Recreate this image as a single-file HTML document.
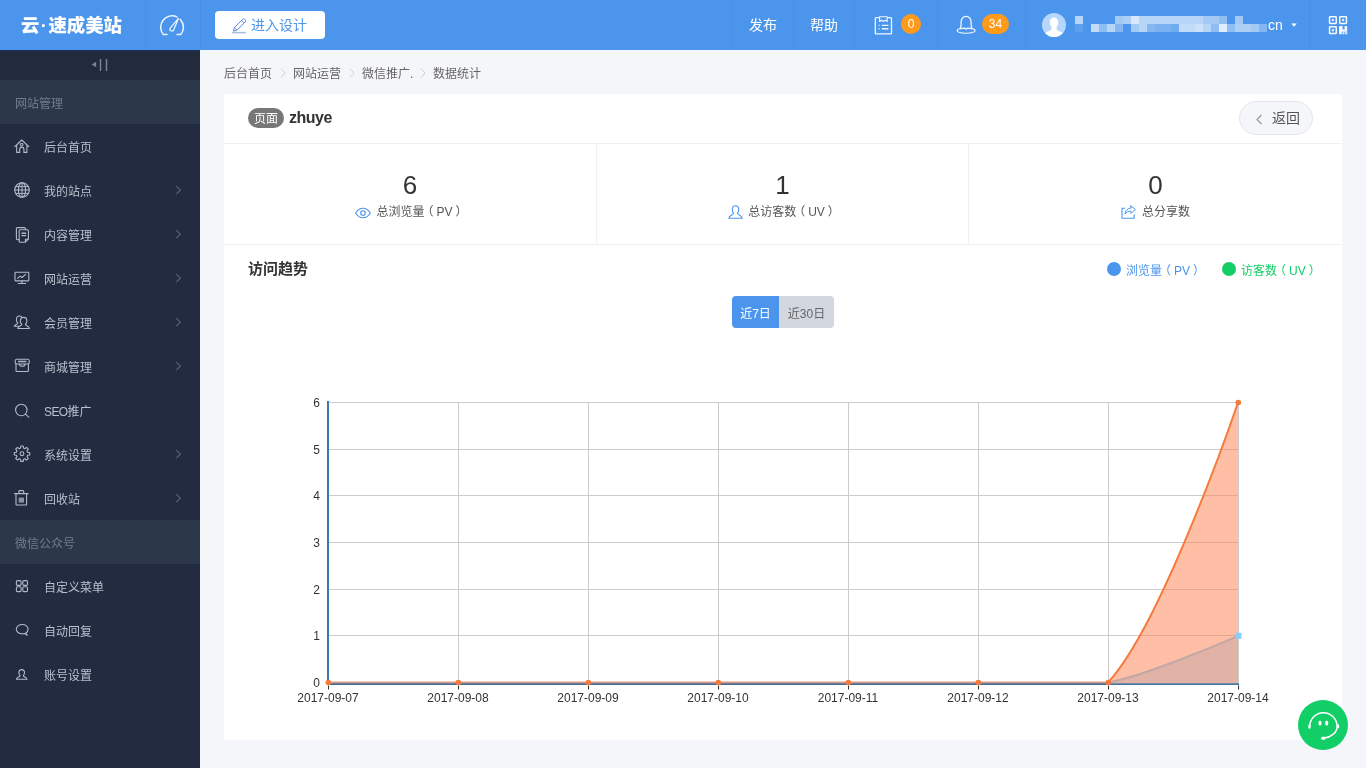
<!DOCTYPE html>
<html lang="zh-CN">
<head>
<meta charset="utf-8">
<title>数据统计</title>
<style>
*{box-sizing:border-box;margin:0;padding:0}
html,body{width:1366px;height:768px;overflow:hidden}
body{font-family:"Liberation Sans","Noto Sans CJK SC",sans-serif;font-size:12px;color:#333;background:#f5f6fa;position:relative}
.po{position:relative;left:-3px}.pc{position:relative;left:3px}
#hd,#sb,#bc,#card,#kf{will-change:transform}
/* header */
#hd{position:absolute;left:0;top:0;width:1366px;height:50px;background:#4b96ec;color:#fff}
#hd .sep{position:absolute;top:0;width:1px;height:50px;background:#4990e3}
#logo{position:absolute;left:21px;top:12px;height:28px;line-height:28px;font-size:18.4px;font-weight:900;color:#fff;white-space:nowrap}
#logo b{display:inline-block;width:9px;text-align:center;font-weight:900}
#design{position:absolute;left:215px;top:11px;width:110px;height:28px;background:#fff;border-radius:4px;color:#4b96ec;font-size:14px;line-height:28px;padding-left:36px;white-space:nowrap}
.hlink{position:absolute;top:0;height:50px;line-height:51px;font-size:14px;color:#fff;white-space:nowrap}
.badge{position:absolute;top:14px;height:20px;border-radius:10px;background:#ff9a1a;color:#fff;font-size:12px;line-height:21px;text-align:center}
/* sidebar */
#sb{position:absolute;left:0;top:50px;width:200px;height:718px;background:#222b3f}
#sb .fold{height:30px;background:#222b3b;border-top:1px solid #17335f}
#sb .sec{height:44px;line-height:48px;overflow:hidden;background:#2c3749;color:#727c8e;font-size:12px;padding-left:15px}
#sb .it{height:44px;line-height:48px;overflow:hidden;color:#b9c0ce;font-size:12px;padding-left:44px;white-space:nowrap}
#sbic{position:absolute;left:0;top:0}
/* main */
#bc{position:absolute;left:224px;top:64px;height:20px;line-height:20px;font-size:12px;color:#666;white-space:nowrap}
#bc span.t{position:absolute;top:0}
#bc svg{position:absolute;top:3.6px;width:6px;height:10px;fill:none;stroke:#cdd0d8;stroke-width:1}
#card{position:absolute;left:224px;top:94px;width:1118px;height:646px;background:#fff;border-radius:3px}
.hl{position:absolute;left:0;width:1118px;height:1px;background:#eff0f4}
.vl{position:absolute;top:50px;width:1px;height:100px;background:#eff0f4}
#pg{position:absolute;left:24px;top:14px;width:36px;height:20px;border-radius:10px;background:#777;color:#fff;font-size:12px;line-height:22px;overflow:hidden;text-align:center}
#pgn{position:absolute;left:65px;top:12px;font-size:16px;letter-spacing:-.5px;font-weight:bold;color:#333;line-height:24px}
#back{position:absolute;left:1015px;top:7px;width:74px;height:34px;border-radius:17px;border:1px solid #e4e7ee;background:#f5f6fa;color:#555;font-size:14px;line-height:32px;padding-left:32px}
#back svg{position:absolute;left:15.500px;top:11.800px;width:7px;height:11px;fill:none;stroke:#999;stroke-width:1.2}
.st{position:absolute;top:50px;height:100px;text-align:center}
.st .n{position:absolute;left:0;right:0;top:24px;font-size:26px;line-height:34px;color:#333}
.st .l{position:absolute;left:0;right:0;top:58px;font-size:12px;line-height:20px;color:#555;white-space:nowrap}
.st .l svg{vertical-align:-2.500px;margin-right:5px;fill:none;stroke:#4b96ec;stroke-width:1.1;stroke-linecap:round;stroke-linejoin:round}
#tt{position:absolute;left:24px;top:164px;font-size:15px;font-weight:bold;color:#333;line-height:22px}
.lg{position:absolute;top:167px;font-size:12px;line-height:21px;white-space:nowrap}
.lg i{position:absolute;left:-19px;top:1px;width:14px;height:14px;border-radius:7px}
.tab{position:absolute;top:202px;height:32px;line-height:36px;overflow:hidden;font-size:12px;text-align:center}
#chart{position:absolute;left:0;top:246px}
#chart text{font-family:"Liberation Sans",sans-serif;font-size:12px;fill:#333}
#kf{position:absolute;left:1298px;top:700px;width:50px;height:50px;border-radius:25px;background:#12ce66}
</style>
</head>
<body>
<div id="hd">
  <div id="logo">云<b>·</b>速成美站</div>
  <div class="sep" style="left:145px"></div>
  <div class="sep" style="left:200px"></div>
  <div id="design">进入设计<svg width="16" height="16" viewBox="231 17.500 16 16" style="position:absolute;left:16px;top:6.500px" fill="none" stroke="#5a8ee2" stroke-width="1" stroke-linejoin="round"><path d="M232.200 32.100h13.600" stroke="#aabbdd" stroke-width="1.500"/><path d="M233.400 30.700l1-3.600 8.300-8.300a1.450 1.450 0 0 1 2.100 0l.5.500a1.450 1.450 0 0 1 0 2.100l-8.300 8.300zM234.400 27.100l2.600 2.600M241.600 19.900l2.600 2.600"/></svg></div>
  <div class="sep" style="left:732px"></div>
  <div class="hlink" style="left:749px">发布</div>
  <div class="sep" style="left:793px"></div>
  <div class="hlink" style="left:810px">帮助</div>
  <div class="sep" style="left:854px"></div>
  <div class="badge" style="left:901px;width:20px">0</div>
  <div class="sep" style="left:937px"></div>
  <div class="badge" style="left:982px;width:27px">34</div>
  <div class="sep" style="left:1025px"></div>
  <div class="hlink" style="left:1268px">cn</div>
  <div class="sep" style="left:1309px"></div>
<svg id="hdic" width="1366" height="50" viewBox="0 0 1366 50" style="position:absolute;left:0;top:0">
<g fill="none" stroke="#fff" stroke-width="1.3" stroke-linecap="round" stroke-linejoin="round" opacity=".92">

<path d="M167 34.400H163.200A11.400 11.400 0 0 1 176.900 16.900M180.300 19.400A11.400 11.400 0 0 1 180.900 34.400H177.100" stroke-width="1.500"/>
<path d="M178.400 18.400L173.550 30.200A1.900 1.900 0 0 1 170.250 28.200Z" stroke-width="1.200"/>

<path d="M879.300 17.700h-3.400a.6.600 0 0 0-.6.600v15a.6.600 0 0 0 .6.600h15a.6.600 0 0 0 .6-.6v-15a.6.600 0 0 0-.6-.6h-3.400"/>
<path d="M879.600 16.800h7.600v4.700l-1.900-1.300-1.900 1.300-1.900-1.300-1.900 1.300z" stroke-width="1.100"/>
<path d="M878.600 25.400h1M881.800 25.400h6.600M878.600 28.700h1M881.800 28.700h6.600" stroke-width="1.400" stroke-linecap="butt"/>

<path d="M960.300 28.600c.5-1.200.8-2.600.8-4.300v-2.400c0-3.100 2.200-5.500 5-5.500s5 2.400 5 5.500v2.400c0 1.700.3 3.100.8 4.300"/>
<path d="M960.300 28.500c-1.900.4-3.200 1.200-3.200 2.100 0 1.500 4 2.600 9 2.600s9-1.100 9-2.600c0-.9-1.300-1.700-3.200-2.100M960.400 28.600c1.400-.3 3.300-.5 4.600-.5l1.100 1.300 1.100-1.300c1.300 0 3.200.2 4.600.5" stroke-width="1.100"/>
</g>

<circle cx="1054" cy="25" r="12" fill="#b7d6fb"/>
<clipPath id="avc"><circle cx="1054" cy="25" r="12"/></clipPath>
<g clip-path="url(#avc)" fill="#fff">
<path d="M1049.800 22.300c0-2.800 1.700-4.700 4.200-4.700s4.200 1.900 4.200 4.700c0 1.700-.7 3.700-1.600 4.800v2.100c0 .8 1.400 1.400 3.400 2.200 1.800.7 3 1.600 3.600 2.700l-4 4h-11.200l-4-4c.6-1.100 1.800-2 3.600-2.700 2-.8 3.400-1.400 3.400-2.200v-2.100c-.9-1.100-1.600-3.100-1.600-4.800z"/>
</g>

<g fill="#fff"><rect x="1075" y="16" width="8" height="8" opacity="0.6"/><rect x="1115" y="16" width="8" height="8" opacity="0.49"/><rect x="1123" y="16" width="8" height="8" opacity="0.55"/><rect x="1131" y="16" width="8" height="8" opacity="0.78"/><rect x="1139" y="16" width="8" height="8" opacity="0.6"/><rect x="1147" y="16" width="8" height="8" opacity="0.6"/><rect x="1155" y="16" width="8" height="8" opacity="0.6"/><rect x="1163" y="16" width="8" height="8" opacity="0.6"/><rect x="1171" y="16" width="8" height="8" opacity="0.6"/><rect x="1179" y="16" width="8" height="8" opacity="0.6"/><rect x="1187" y="16" width="8" height="8" opacity="0.6"/><rect x="1195" y="16" width="8" height="8" opacity="0.6"/><rect x="1203" y="16" width="8" height="8" opacity="0.49"/><rect x="1211" y="16" width="8" height="8" opacity="0.49"/><rect x="1219" y="16" width="8" height="8" opacity="0.38"/><rect x="1235" y="16" width="8" height="8" opacity="0.49"/><rect x="1075" y="24" width="8" height="8" opacity="0.09"/><rect x="1091" y="24" width="8" height="8" opacity="0.66"/><rect x="1099" y="24" width="8" height="8" opacity="0.38"/><rect x="1107" y="24" width="8" height="8" opacity="0.6"/><rect x="1115" y="24" width="8" height="8" opacity="0.32"/><rect x="1131" y="24" width="8" height="8" opacity="0.49"/><rect x="1139" y="24" width="8" height="8" opacity="0.6"/><rect x="1147" y="24" width="8" height="8" opacity="0.32"/><rect x="1155" y="24" width="8" height="8" opacity="0.26"/><rect x="1163" y="24" width="8" height="8" opacity="0.26"/><rect x="1171" y="24" width="8" height="8" opacity="0.2"/><rect x="1179" y="24" width="8" height="8" opacity="0.66"/><rect x="1187" y="24" width="8" height="8" opacity="0.66"/><rect x="1195" y="24" width="8" height="8" opacity="0.72"/><rect x="1203" y="24" width="8" height="8" opacity="0.6"/><rect x="1211" y="24" width="8" height="8" opacity="0.38"/><rect x="1219" y="24" width="8" height="8" opacity="0.83"/><rect x="1227" y="24" width="8" height="8" opacity="0.38"/><rect x="1235" y="24" width="8" height="8" opacity="0.55"/><rect x="1243" y="24" width="8" height="8" opacity="0.55"/><rect x="1251" y="24" width="8" height="8" opacity="0.49"/><rect x="1259" y="24" width="8" height="8" opacity="0.32"/></g>

<path d="M1291.300 23.400h5.400l-2.700 3.300z" fill="#fff"/>

<g fill="none" stroke="#fff" stroke-width="1.500" opacity=".95">
<rect x="1329.550" y="16.750" width="6.700" height="6.700" rx=".6"/>
<rect x="1339.750" y="16.750" width="6.700" height="6.700" rx=".6"/>
<rect x="1329.550" y="26.850" width="6.700" height="6.700" rx=".6"/>
</g>
<g fill="#fff" opacity=".95">
<rect x="1331.900" y="19.100" width="2" height="2"/>
<rect x="1342.100" y="19.100" width="2" height="2"/>
<rect x="1331.900" y="29.200" width="2" height="2"/>
<path d="M1339 27.100q0-1 1-1h2.600v3.300h2v-3.300h1.600q1 0 1 1v4.600h-5.400v2.600h-1.800q-1 0-1-1z"/>
<rect x="1342.600" y="32.200" width="1.800" height="2.100"/>
<rect x="1345.300" y="32.200" width="1.900" height="2.100"/>
</g>
</svg>
</div>

<div id="sb">
  <div class="fold"></div>
  <div class="sec">网站管理</div>
  <div class="it">后台首页</div>
  <div class="it">我的站点</div>
  <div class="it">内容管理</div>
  <div class="it">网站运营</div>
  <div class="it">会员管理</div>
  <div class="it">商城管理</div>
  <div class="it"><span style="letter-spacing:-.6px">SEO</span>推广</div>
  <div class="it">系统设置</div>
  <div class="it">回收站</div>
  <div class="sec">微信公众号</div>
  <div class="it">自定义菜单</div>
  <div class="it">自动回复</div>
  <div class="it">账号设置</div>
<svg id="sbic" width="200" height="718" viewBox="0 50 200 718">
<g fill="none" stroke="#b3bbca" stroke-width="1.1" stroke-linecap="round" stroke-linejoin="round">

<path d="M96.2 61.7v5.5l-4.5-2.75z" fill="#7a859a" stroke="none"/>
<path d="M100.5 59v12M106.5 59v12" stroke="#7a859a" stroke-width="1.4" stroke-linecap="butt"/>

<path d="M14.8 146.6l7-6.6 7 6.6M16.7 145.2v7.2h3v-3.2a2.1 2.1 0 0 1 4.2 0v3.2h3v-7.2"/>
<rect x="20.7" y="143.6" width="2.2" height="2.2" stroke-width="1"/>

<circle cx="22" cy="190" r="7.3"/>
<ellipse cx="22" cy="190" rx="3.6" ry="7.3"/>
<path d="M22 182.7v14.6M15.6 186.6h12.8M14.7 190h14.6M15.6 193.4h12.8" stroke-width="1"/>

<path d="M18.6 239.6h-1.2a1 1 0 0 1-1-1v-10a1 1 0 0 1 1-1h7a1 1 0 0 1 1 1v1"/>
<path d="M19.2 230.8a1 1 0 0 1 1-1h7.2a1 1 0 0 1 1 1v8.4l-3 3h-5.2a1 1 0 0 1-1-1zM28.2 239.2h-2.8v2.9"/>
<path d="M21.5 233.3h4.6M21.5 235.6h4.6" stroke-width="1.4" stroke-linecap="butt"/>

<rect x="15" y="272.3" width="13.8" height="8.6" rx=".6"/>
<path d="M21.9 281v2.3M18.2 283.5h7.4M17.6 278.4l2.4-2.3 2 1.4 3.6-3.2"/>

<path d="M21.500 316.600c-.5-.4-1.200-.6-1.900-.6-1.900 0-3.200 1.600-3.200 3.700 0 1.400.6 2.600 1.500 3.300-.3 1.600-3.200 1.400-3.600 3.300h4.300"/>
<path d="M21.800 324.300c-1-.8-1.500-1.900-1.500-3.200 0-2.100 1.400-3.700 3.300-3.700s3.300 1.600 3.300 3.700c0 1.300-.5 2.400-1.500 3.200.4 1.800 3.700 1.700 4 4.200H17.800c.3-2.500 3.600-2.400 4-4.200z"/>

<path d="M16.600 359.200h11.200c1 0 1.500 1 1.500 2v1.100c0 1-.8 1.700-1.700 1.700h-10.800c-.9 0-1.700-.7-1.700-1.700v-1.100c0-1 .5-2 1.500-2z"/>
<path d="M18.500 361.500h7.400" stroke-width="1.300"/>
<path d="M16 364.200v6.300a1 1 0 0 0 1 1h10.400a1 1 0 0 0 1-1v-6.300M19.500 364.200c0 1.200 1.100 2.100 2.700 2.100s2.700-.9 2.700-2.100"/>

<circle cx="21.300" cy="410" r="5.700"/>
<path d="M25.500 414.200l3.300 2.900"/>

<circle cx="22" cy="453.700" r="1.900"/>
<path d="M20.51 448.09L20.76 446.00L23.24 446.00L23.49 448.09L24.91 448.68L26.57 447.38L28.32 449.13L27.02 450.79L27.61 452.21L29.70 452.46L29.70 454.94L27.61 455.19L27.02 456.61L28.32 458.27L26.57 460.02L24.91 458.72L23.49 459.31L23.24 461.40L20.76 461.40L20.51 459.31L19.09 458.72L17.43 460.02L15.68 458.27L16.98 456.61L16.39 455.19L14.30 454.94L14.30 452.46L16.39 452.21L16.98 450.79L15.68 449.13L17.43 447.38L19.09 448.68Z"/>

<path d="M14.500 493.600h13.600M18.900 493.400v-2a.8.800 0 0 1 .8-.8h3.200a.8.800 0 0 1 .8.800v2M16 493.800v10.400a.8.800 0 0 0 .8.800h9a.8.800 0 0 0 .8-.8v-10.400"/>
<rect x="18.700" y="497.600" width="5.300" height="5" fill="#8a93a5" stroke="none"/>

<rect x="16.400" y="580.600" width="4.700" height="4.800" rx="1.200"/>
<rect x="22.800" y="580.600" width="4.700" height="4.800" rx="1.200"/>
<rect x="16.400" y="586.800" width="4.700" height="4.800" rx="1.200"/>
<rect x="22.800" y="586.800" width="4.700" height="4.800" rx="1.200"/>

<path d="M25.800 633c1.500-.9 2.300-2.300 2.300-3.800 0-2.600-2.600-4.700-5.900-4.700s-5.900 2.100-5.900 4.700 2.600 4.700 5.900 4.700c.8 0 1.600-.1 2.300-.4l2.700 1.700z"/>

<path d="M20.100 675.600c-.8-.7-1.200-1.700-1.200-2.800 0-1.900 1.200-3.200 2.800-3.200s2.800 1.300 2.800 3.200c0 1.100-.4 2.100-1.200 2.800.3 1.500 3.400 1.400 3.700 3.600H16.400c.3-2.200 3.400-2.100 3.700-3.600z"/>
</g>
<g fill="none" stroke="#5c6678" stroke-width="1.100">
<path d="M176.300 186.200l4 4-4 4"/>
<path d="M176.300 230.200l4 4-4 4"/>
<path d="M176.300 274.200l4 4-4 4"/>
<path d="M176.300 318.200l4 4-4 4"/>
<path d="M176.300 362.200l4 4-4 4"/>
<path d="M176.300 450.200l4 4-4 4"/>
<path d="M176.300 494.200l4 4-4 4"/>
</g>
</svg>
</div>

<div id="bc">
  <span class="t" style="left:0">后台首页</span>
  <svg style="left:55.500px" viewBox="0 0 6 10"><path d="M1 .5l4 4.500-4 4.500"/></svg>
  <span class="t" style="left:69px">网站运营</span>
  <svg style="left:124.500px" viewBox="0 0 6 10"><path d="M1 .5l4 4.500-4 4.500"/></svg>
  <span class="t" style="left:138px">微信推广.</span>
  <svg style="left:195.500px" viewBox="0 0 6 10"><path d="M1 .5l4 4.500-4 4.500"/></svg>
  <span class="t" style="left:209px">数据统计</span>
</div>

<div id="card">
  <div id="pg">页面</div>
  <div id="pgn">zhuye</div>
  <div id="back">返回<svg viewBox="0 0 7 11"><path d="M5.500 1l-4.500 4.500 4.500 4.500"/></svg></div>
  <div class="hl" style="top:49px"></div>
  <div class="st" style="left:0;width:372px"><div class="n">6</div><div class="l"><svg width="16" height="12" viewBox="0 0 16 12"><path d="M.7 6c1.800-3.200 4.400-4.800 7.300-4.800s5.500 1.600 7.300 4.800c-1.800 3.200-4.400 4.800-7.300 4.800s-5.500-1.600-7.300-4.800z"/><circle cx="8" cy="6" r="2.300"/></svg>总浏览量<span class="po">（</span>PV<span class="pc">）</span></div></div>
  <div class="vl" style="left:372px"></div>
  <div class="st" style="left:373px;width:371px"><div class="n">1</div><div class="l"><svg width="15" height="14" viewBox="0 0 15 14"><path d="M5.600 8.200C4.700 7.300 4.300 6 4.300 4.700 4.300 2.300 5.600.7 7.500.7S10.700 2.300 10.700 4.700C10.700 6 10.300 7.300 9.400 8.200 9.900 10.100 13.900 10.100 14.200 13.300H.8C1.100 10.100 5.100 10.100 5.600 8.200z"/></svg>总访客数<span class="po">（</span>UV<span class="pc">）</span></div></div>
  <div class="vl" style="left:744px"></div>
  <div class="st" style="left:745px;width:373px"><div class="n">0</div><div class="l"><svg width="16" height="14" viewBox="0 0 16 14"><path d="M4.200 3.200H1v10.100h12.200V9.600" stroke-linejoin="miter" stroke-linecap="butt"/><path d="M9.800.8l4.600 3.800-4.600 3.800V6.200C7.200 6.200 5.200 7.200 4 9.200 4.300 5.500 6.300 3.300 9.800 3z" stroke-width="1"/></svg>总分享数</div></div>
  <div class="hl" style="top:150px"></div>
  <div id="tt">访问趋势</div>
  <div class="lg" style="left:902px;color:#4b96ec"><i style="background:#4b96ec"></i>浏览量<span class="po">（</span>PV<span class="pc">）</span></div>
  <div class="lg" style="left:1017px;color:#12ce66"><i style="background:#12ce66"></i>访客数<span class="po">（</span>UV<span class="pc">）</span></div>
  <div class="tab" style="left:508px;width:47px;background:#4b96ec;color:#fff;border-radius:4px 0 0 4px">近7日</div>
  <div class="tab" style="left:555px;width:55px;background:#d3d7e0;color:#666;border-radius:0 4px 4px 0">近30日</div>
<svg id="chart" width="1118" height="400" viewBox="224 340 1118 400">
<path d="M458.5 402.0V682.5M588.5 402.0V682.5M718.5 402.0V682.5M848.5 402.0V682.5M978.5 402.0V682.5M1108.5 402.0V682.5M1238.5 402.0V682.5M328 635.5H1239M328 589.5H1239M328 542.5H1239M328 495.5H1239M328 449.5H1239M328 402.5H1239" stroke="#ccc" stroke-width="1" fill="none"/>
<path d="M328 401.0V685" stroke="#3c78aa" stroke-width="2" fill="none"/>
<rect x="1108" y="683" width="131" height="2" fill="#3c78aa"/>
<path d="M1108 682.5C1148.2 675.3 1238 635.8 1238 635.8V683.5H1108Z" fill="#87cefa" fill-opacity=".5"/>
<path d="M1108 682.5C1148.2 675.3 1238 635.8 1238 635.8" fill="none" stroke="#87cefa" stroke-width="2"/>
<path d="M1108 682.5C1162.9 623.4 1238 402.5 1238 402.5V683.5H1108Z" fill="#ff7f50" fill-opacity=".5"/>
<path d="M1108 682.5C1162.9 623.4 1238 402.5 1238 402.5" fill="none" stroke="#f67a3c" stroke-width="2"/>
<rect x="329" y="681" width="779" height="1" fill="#f5cdbf"/>
<rect x="329" y="682" width="779" height="1" fill="#c99e92"/>
<rect x="329" y="683" width="779" height="1" fill="#80798b"/>
<rect x="329" y="684" width="779" height="1" fill="#3f709c"/>
<path d="M328.5 685.5V689.5M458.5 685.5V689.5M588.5 685.5V689.5M718.5 685.5V689.5M848.5 685.5V689.5M978.5 685.5V689.5M1108.5 685.5V689.5M1238.5 685.5V689.5" stroke="#333" stroke-width="1" fill="none"/>
<circle cx="328.3" cy="682.5" r="2.8" fill="#f67a3c"/>
<circle cx="458.3" cy="682.5" r="2.8" fill="#f67a3c"/>
<circle cx="588.3" cy="682.5" r="2.8" fill="#f67a3c"/>
<circle cx="718.3" cy="682.5" r="2.8" fill="#f67a3c"/>
<circle cx="848.3" cy="682.5" r="2.8" fill="#f67a3c"/>
<circle cx="978.3" cy="682.5" r="2.8" fill="#f67a3c"/>
<circle cx="1108.3" cy="682.5" r="2.8" fill="#f67a3c"/>
<circle cx="1238.3" cy="402.5" r="2.8" fill="#f67a3c"/>
<rect x="1235.5" y="632.8" width="6" height="6" fill="#87cefa"/>
<text x="320" y="687.0" text-anchor="end">0</text>
<text x="320" y="640.3" text-anchor="end">1</text>
<text x="320" y="593.7" text-anchor="end">2</text>
<text x="320" y="547.0" text-anchor="end">3</text>
<text x="320" y="500.3" text-anchor="end">4</text>
<text x="320" y="453.7" text-anchor="end">5</text>
<text x="320" y="407.0" text-anchor="end">6</text>
<text x="328" y="702" text-anchor="middle">2017-09-07</text>
<text x="458" y="702" text-anchor="middle">2017-09-08</text>
<text x="588" y="702" text-anchor="middle">2017-09-09</text>
<text x="718" y="702" text-anchor="middle">2017-09-10</text>
<text x="848" y="702" text-anchor="middle">2017-09-11</text>
<text x="978" y="702" text-anchor="middle">2017-09-12</text>
<text x="1108" y="702" text-anchor="middle">2017-09-13</text>
<text x="1238" y="702" text-anchor="middle">2017-09-14</text>
</svg>
</div>

<div id="kf"><svg width="50" height="50" viewBox="0 0 50 50" fill="none" stroke="#fff" stroke-width="1.500" stroke-linecap="round"><path d="M11.700 26.400A13.700 13.700 0 0 1 39.100 26.400C39.100 32.300 33.500 37.200 26 38.100"/><ellipse cx="11.500" cy="26.500" rx="1.300" ry="2.200" fill="#fff" stroke="none"/><ellipse cx="39.900" cy="26.200" rx="1.300" ry="2.200" fill="#fff" stroke="none"/><ellipse cx="25.300" cy="38.200" rx="2.100" ry="1.700" fill="#fff" stroke="none"/><ellipse cx="22" cy="23.100" rx="1.600" ry="2.700" fill="#fff" stroke="none"/><ellipse cx="28.700" cy="23.100" rx="1.600" ry="2.700" fill="#fff" stroke="none"/></svg></div>
</body>
</html>
